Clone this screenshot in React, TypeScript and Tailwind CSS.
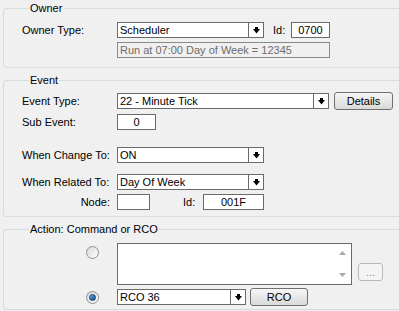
import React from 'react'

const FONT = { fontFamily: '"Liberation Sans", Arial, sans-serif' }

function Arrow() {
  return (
    <svg width="7" height="7" viewBox="0 0 7 7">
      <rect x="2" y="0" width="3" height="2" fill="#000" />
      <polygon points="0,2 7,2 3.5,6.5" fill="#000" />
    </svg>
  )
}

function Combo({ value, width, className = '' }: { value: string; width: number; className?: string }) {
  return (
    <div
      className={`flex h-[16px] border border-[#6a6a6a] bg-white ${className}`}
      style={{ width }}
    >
      <div className="flex-1 pl-[2px] leading-[14px] text-black">{value}</div>
      <div className="flex w-[15px] items-center justify-center border-l border-[#6a6a6a]">
        <Arrow />
      </div>
    </div>
  )
}

function Box({ value, width, className = '' }: { value: string; width: number; className?: string }) {
  return (
    <div
      className={`h-[16px] border border-[#6a6a6a] bg-white text-center leading-[14px] ${className}`}
      style={{ width }}
    >
      {value}
    </div>
  )
}

function Button({ label, width, disabled }: { label: string; width: number; disabled?: boolean }) {
  return (
    <div
      className={`flex h-[18px] items-center justify-center rounded-[3px] border ${
        disabled
          ? 'border-[#b5b9bc] bg-[#f4f4f4] text-[#8a8a8a]'
          : 'border-[#707070] bg-gradient-to-b from-[#f6f6f6] to-[#dadada] text-black'
      }`}
      style={{ width }}
    >
      {label}
    </div>
  )
}

function Radio({ checked }: { checked?: boolean }) {
  return (
    <div className="flex h-[13px] w-[13px] items-center justify-center rounded-full border border-[#8e8f8f] bg-gradient-to-br from-[#d8d8d8] to-[#ffffff]">
      {checked && (
        <div className="h-[7px] w-[7px] rounded-full border border-[#1a3d6e] bg-gradient-to-br from-[#5fb6ec] to-[#134a8c]"></div>
      )}
    </div>
  )
}

function Label({ children, right }: { children: React.ReactNode; right?: boolean }) {
  return <div className={`w-[95px] shrink-0 ${right ? 'pr-[7px] text-right' : ''}`}>{children}</div>
}

export default function App() {
  return (
    <div
      className="h-[311px] w-[399px] overflow-hidden bg-[#f0f0f0] pl-[3px] pt-[2px] text-[11px] leading-[13px] text-black"
      style={FONT}
    >
      <div className="w-[420px]">
        <fieldset className="h-[66px] rounded-[3px] border border-[#d3dce2] pl-[18px]">
          <legend className="ml-[7px] px-[1px] leading-[13px]">Owner</legend>
          <div className="mt-[7px] flex items-center">
            <Label>Owner Type:</Label>
            <Combo value="Scheduler" width={147} />
            <span className="ml-[9px] w-[18px]">Id:</span>
            <Box value="0700" width={39} />
          </div>
          <div className="mt-[4px] flex items-center">
            <Label>{''}</Label>
            <div className="h-[16px] w-[213px] border border-[#8a8a8a] pl-[2px] leading-[14px] text-[#6d6d6d]">
              Run at 07:00 Day of Week = 12345
            </div>
          </div>
        </fieldset>

        <fieldset className="mt-[6px] h-[143px] rounded-[3px] border border-[#d3dce2] pl-[18px]">
          <legend className="ml-[7px] px-[1px] leading-[13px]">Event</legend>
          <div className="mt-[5px] flex items-center">
            <Label>Event Type:</Label>
            <Combo value="22 - Minute Tick" width={212} />
            <div className="ml-[5px]">
              <Button label="Details" width={59} />
            </div>
          </div>
          <div className="mt-[4px] flex items-center">
            <Label>Sub Event:</Label>
            <Box value="0" width={39} />
          </div>
          <div className="mt-[17px] flex items-center">
            <Label>When Change To:</Label>
            <Combo value="ON" width={147} />
          </div>
          <div className="mt-[11px] flex items-center">
            <Label>When Related To:</Label>
            <Combo value="Day Of Week" width={147} />
          </div>
          <div className="mt-[4px] flex items-center">
            <Label right>Node:</Label>
            <Box value="" width={33} />
            <span className="ml-[33px] w-[20px]">Id:</span>
            <Box value="001F" width={61} />
          </div>
        </fieldset>

        <fieldset className="mt-[6px] h-[87px] rounded-[3px] border border-[#d3dce2] pl-[18px]">
          <legend className="ml-[7px] px-[1px] leading-[13px]">Action: Command or RCO</legend>
          <div className="mt-[7px] flex">
            <div className="flex w-[95px] shrink-0 justify-end pr-[18px] pt-[3px]">
              <Radio />
            </div>
            <div className="flex h-[42px] w-[235px] border border-[#6a6a6a] bg-white">
              <div className="flex-1"></div>
              <div className="flex w-[17px] flex-col items-center justify-between py-[7px]">
                <svg width="7" height="4" viewBox="0 0 7 4">
                  <polygon points="0,4 7,4 3.5,0" fill="#a8a8a8" />
                </svg>
                <svg width="7" height="4" viewBox="0 0 7 4">
                  <polygon points="0,0 7,0 3.5,4" fill="#a8a8a8" />
                </svg>
              </div>
            </div>
            <div className="ml-[6px] flex items-end pb-[4px]">
              <Button label="..." width={25} disabled />
            </div>
          </div>
          <div className="mt-[3px] flex items-center">
            <div className="flex w-[95px] shrink-0 justify-end pr-[18px]">
              <Radio checked />
            </div>
            <Combo value="RCO 36" width={129} />
            <div className="ml-[4px]">
              <Button label="RCO" width={58} />
            </div>
          </div>
        </fieldset>
      </div>
    </div>
  )
}
